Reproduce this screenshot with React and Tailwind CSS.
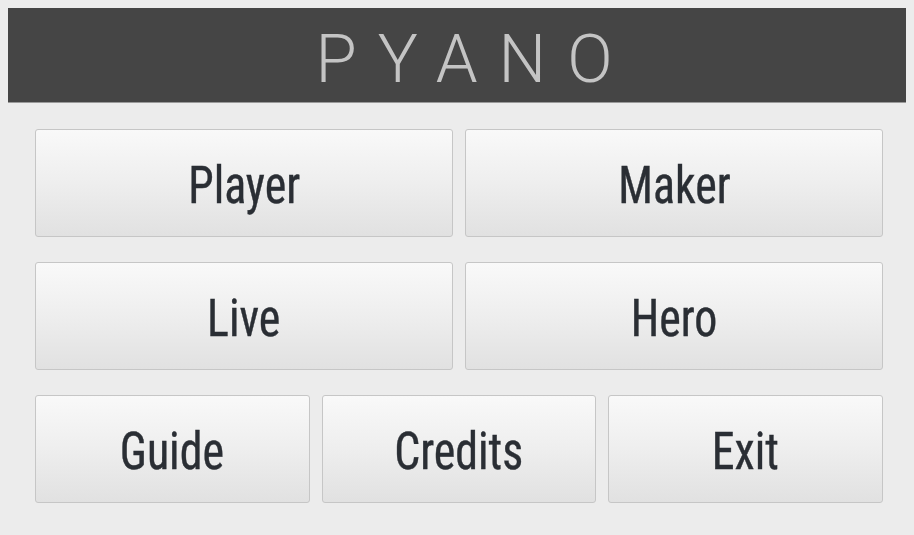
import React from 'react';

const Btn = ({ label }) => (
    <button className="h-[108px] rounded-[3px] border border-[#c6c6c6] bg-gradient-to-b from-[#f9f9f9] via-[#eeeeee] to-[#e1e1e1] text-[#2a2e34] text-[51px] font-normal leading-none flex items-center justify-center [-webkit-text-stroke:0.4px_#2a2e34] [font-family:'Roboto_Condensed','DejaVu_Sans_Condensed','Liberation_Sans_Narrow',sans-serif]">
        <span className="inline-block scale-x-[0.9] pt-1">{label}</span>
    </button>
);

const App = () => {
    return (
        <div className="w-[914px] h-[535px] bg-[#ececec] p-2 overflow-hidden">
            <div className="h-[95px] bg-[#454545] border-b border-[#9a9a9a] flex items-center justify-center">
                <h1 className="text-[67px] font-light tracking-[21px] pl-[35px] pt-[9px] text-[#c4c4c4] leading-none [font-family:Roboto,sans-serif]">
                    PYANO
                </h1>
            </div>

            <div className="mt-[26px] ml-[27px] w-[848px] flex flex-col gap-[25px]">
                <div className="grid grid-cols-2 gap-3">
                    <Btn label="Player" />
                    <Btn label="Maker" />
                </div>
                <div className="grid grid-cols-2 gap-3">
                    <Btn label="Live" />
                    <Btn label="Hero" />
                </div>
                <div className="grid grid-cols-3 gap-3">
                    <Btn label="Guide" />
                    <Btn label="Credits" />
                    <Btn label="Exit" />
                </div>
            </div>
        </div>
    );
};

export default App;
